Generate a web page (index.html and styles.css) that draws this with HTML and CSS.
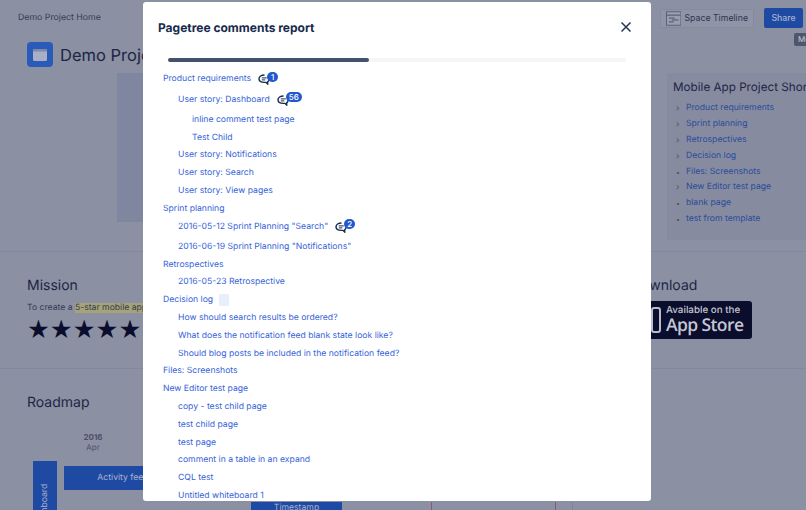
FILE: index.html
```html
<!DOCTYPE html>
<html lang="en">
<head>
    <meta charset="UTF-8">
    <meta name="viewport" content="width=device-width, initial-scale=1.0">
    <title>Pagetree comments report - Demo Project</title>
    <link rel="stylesheet" href="styles.css">
</head>
<body>
    <div class="page">
        <header class="topbar">
            <span class="crumb">Demo Project Home</span>
            <div class="actions">
                <button class="timeline-btn">
                    <svg class="timeline-icon" width="16" height="15" viewBox="0 0 16 15">
                        <rect x="0.5" y="0.5" width="15" height="14" fill="#9a9fb0" stroke="#5a6076"/>
                        <path d="M1 4h14M3 7h6M6 9h7M3 11h5" stroke="#4a5068" fill="none"/>
                    </svg>
                    Space Timeline
                </button>
                <button class="share-btn">Share</button>
            </div>
        </header>
        <div class="tooltip">More</div>

        <div class="title-row">
            <div class="space-logo">
                <svg width="14" height="12" viewBox="0 0 14 12">
                    <rect width="14" height="12" rx="1.5" fill="#a9b0c6"/>
                    <rect x="0" y="0" width="14" height="2.5" fill="#7f88a8"/>
                </svg>
            </div>
            <h1>Demo Project Home</h1>
        </div>

        <section class="top-section">
            <div class="hero"></div>
            <aside class="shortcuts">
                <h3>Mobile App Project Shortcuts</h3>
                <ul>
                    <li class="parent"><a>Product requirements</a></li>
                    <li class="parent"><a>Sprint planning</a></li>
                    <li class="parent"><a>Retrospectives</a></li>
                    <li class="parent"><a>Decision log</a></li>
                    <li class="leaf"><a>Files: Screenshots</a></li>
                    <li class="parent"><a>New Editor test page</a></li>
                    <li class="leaf"><a>blank page</a></li>
                    <li class="leaf"><a>test from template</a></li>
                </ul>
            </aside>
        </section>

        <section class="mission-section">
            <div class="mission">
                <h2>Mission</h2>
                <p>To create a <mark>5-star mobile app</mark></p>
                <div class="stars">★★★★★</div>
            </div>
            <div class="download">
                <h2>Download</h2>
                <div class="badge-store">
                    <svg class="phone" width="10" height="26" viewBox="0 0 10 26">
                        <rect x="1" y="1" width="8" height="24" rx="2" fill="none" stroke="#b9bccb" stroke-width="2"/>
                    </svg>
                    <div class="store-text">
                        <span class="store-small">Available on the</span>
                        <span class="store-big">App Store</span>
                    </div>
                </div>
            </div>
        </section>

        <section class="roadmap">
            <h2>Roadmap</h2>
            <div class="year"><b>2016</b><span>Apr</span></div>
            <div class="chart">
                <div class="lane"><span>Dashboard</span></div>
                <div class="bars">
                    <div class="bar bar-activity">Activity feed</div>
                    <div class="bar bar-time">Timestamp</div>
                </div>
                <div class="marks">
                    <i class="mark-red"></i>
                    <i class="mark-red"></i>
                    <i class="mark-grey"></i>
                </div>
            </div>
        </section>

        <div class="modal">
            <div class="modal-head">
                <h2>Pagetree comments report</h2>
                <svg class="close" width="12" height="12" viewBox="0 0 12 12">
                    <path d="M1.5 1.5l9 9M10.5 1.5l-9 9" stroke="#253858" stroke-width="1.5" fill="none"/>
                </svg>
            </div>
            <div class="progress"><div class="progress-fill"></div></div>
            <ul class="tree">
                <li class="lvl0 commented"><a>Product requirements</a><span class="comments"><svg width="14" height="12" viewBox="0 0 14 12"><path d="M6.5 2C3.4 2 1 3.4 1 5.7s2.4 3.7 5.5 3.7h1.6l1.6 1.6V8.9c1-.7 1.5-1.8 1.4-3.2" fill="#fff" stroke="#172b4d" stroke-width="1.4"/><path d="M3.8 4.9h5M3.8 6.9h3.5" stroke="#172b4d"/></svg><b>1</b></span></li>
                <li class="lvl1 commented"><a>User story: Dashboard</a><span class="comments"><svg width="14" height="12" viewBox="0 0 14 12"><path d="M6.5 2C3.4 2 1 3.4 1 5.7s2.4 3.7 5.5 3.7h1.6l1.6 1.6V8.9c1-.7 1.5-1.8 1.4-3.2" fill="#fff" stroke="#172b4d" stroke-width="1.4"/><path d="M3.8 4.9h5M3.8 6.9h3.5" stroke="#172b4d"/></svg><b>56</b></span></li>
                <li class="lvl2"><a>inline comment test page</a></li>
                <li class="lvl2"><a>Test Child</a></li>
                <li class="lvl1"><a>User story: Notifications</a></li>
                <li class="lvl1"><a>User story: Search</a></li>
                <li class="lvl1"><a>User story: View pages</a></li>
                <li class="lvl0"><a>Sprint planning</a></li>
                <li class="lvl1 commented"><a>2016-05-12 Sprint Planning "Search"</a><span class="comments"><svg width="14" height="12" viewBox="0 0 14 12"><path d="M6.5 2C3.4 2 1 3.4 1 5.7s2.4 3.7 5.5 3.7h1.6l1.6 1.6V8.9c1-.7 1.5-1.8 1.4-3.2" fill="#fff" stroke="#172b4d" stroke-width="1.4"/><path d="M3.8 4.9h5M3.8 6.9h3.5" stroke="#172b4d"/></svg><b>2</b></span></li>
                <li class="lvl1"><a>2016-06-19 Sprint Planning "Notifications"</a></li>
                <li class="lvl0"><a>Retrospectives</a></li>
                <li class="lvl1"><a>2016-05-23 Retrospective</a></li>
                <li class="lvl0"><a>Decision log</a><span class="blank-chip"></span></li>
                <li class="lvl1"><a>How should search results be ordered?</a></li>
                <li class="lvl1"><a>What does the notification feed blank state look like?</a></li>
                <li class="lvl1"><a>Should blog posts be included in the notification feed?</a></li>
                <li class="lvl0"><a>Files: Screenshots</a></li>
                <li class="lvl0"><a>New Editor test page</a></li>
                <li class="lvl1"><a>copy - test child page</a></li>
                <li class="lvl1"><a>test child page</a></li>
                <li class="lvl1"><a>test page</a></li>
                <li class="lvl1"><a>comment in a table in an expand</a></li>
                <li class="lvl1"><a>CQL test</a></li>
                <li class="lvl1"><a>Untitled whiteboard 1</a></li>
            </ul>
        </div>
    </div>
</body>
</html>
```

FILE: styles.css
```css
* {
    box-sizing: border-box;
}

body {
    margin: 0;
    font-family: 'Inter', sans-serif;
    text-rendering: geometricPrecision;
}

.page {
    position: relative;
    width: 806px;
    height: 510px;
    overflow: hidden;
    background: #8b90a3;
    color: #1d2645;
}

h1,
h2,
h3,
p,
ul {
    margin: 0;
    padding: 0;
    font-weight: 400;
}

ul {
    list-style: none;
}

.topbar {
    display: flex;
    justify-content: space-between;
    align-items: center;
    height: 36px;
    padding: 0 3px 0 18px;
}

.crumb {
    font-size: 8.75px;
    color: #353b54;
}

.actions {
    display: flex;
    align-items: center;
    gap: 10px;
}

.timeline-btn {
    display: flex;
    align-items: center;
    gap: 3px;
    width: 94px;
    height: 19px;
    padding: 0 5px;
    background: #8f94a7;
    border: 1px solid #858a9e;
    font: 8.75px 'Inter', sans-serif;
    color: #2f354e;
    white-space: nowrap;
}

.share-btn {
    width: 39px;
    height: 20px;
    background: #1f4aa3;
    border: none;
    border-radius: 2px;
    font: 500 8.75px 'Inter', sans-serif;
    color: #a9b3cf;
}

.tooltip {
    position: absolute;
    top: 33px;
    left: 794px;
    height: 13px;
    padding: 0 4px;
    background: #4f566c;
    border-radius: 2px;
    font-size: 8px;
    line-height: 13px;
    color: #c9ccd6;
}

.title-row {
    display: flex;
    align-items: center;
    gap: 7px;
    height: 37px;
    padding: 0 0 0 27px;
}

.space-logo {
    display: flex;
    align-items: center;
    justify-content: center;
    width: 26px;
    height: 25px;
    background: #2a5bb8;
    border-radius: 4px;
}

h1 {
    font-size: 16.5px;
    white-space: nowrap;
}

.top-section {
    display: flex;
    justify-content: space-between;
    height: 179px;
    padding-left: 117px;
    border-bottom: 1px solid #83889c;
}

.hero {
    width: 200px;
    height: 149px;
    background: #7e879f;
}

.shortcuts {
    width: 139px;
    height: 167px;
    padding: 6px 0 0 6px;
    background: #868ba0;
}

.shortcuts h3 {
    font-size: 11.7px;
    line-height: 16px;
    margin-bottom: 6px;
    white-space: nowrap;
}

.shortcuts li {
    position: relative;
    height: 15.9px;
    padding-left: 13px;
    font-size: 8.65px;
    line-height: 15.9px;
    color: #2a4c9a;
    white-space: nowrap;
}

.shortcuts li::before {
    position: absolute;
    left: 3px;
    color: #4d5369;
    font-size: 7px;
}

.shortcuts .parent::before {
    content: "›";
    font-size: 9px;
}

.shortcuts .leaf::before {
    content: "•";
}

.mission-section {
    display: flex;
    justify-content: space-between;
    height: 117px;
    padding: 24px 54px 0 27px;
    border-bottom: 1px solid #83889c;
}

.mission-section h2,
.roadmap h2 {
    font-size: 14px;
    line-height: 20px;
}

.mission p {
    margin-top: 6px;
    font-size: 8.65px;
    line-height: 12px;
    color: #353b54;
    white-space: nowrap;
}

mark {
    background: #a5a377;
    color: #353b54;
}

.stars {
    margin-top: 2px;
    font-family: 'DejaVu Sans', sans-serif;
    font-size: 25.5px;
    line-height: 28px;
    color: #0a0d2b;
    white-space: nowrap;
}

.download {
    width: 121px;
}

.badge-store {
    display: flex;
    align-items: center;
    gap: 5px;
    width: 121px;
    height: 38px;
    margin-top: 5px;
    padding-left: 20px;
    background: #0a0d2b;
    border-radius: 3px;
}

.store-text {
    display: flex;
    flex-direction: column;
    color: #c4c7d3;
}

.store-small {
    font-size: 9.8px;
    font-weight: 500;
    line-height: 10px;
}

.store-big {
    font-family: 'Open Sans', sans-serif;
    font-size: 17.5px;
    font-weight: 600;
    line-height: 19px;
    letter-spacing: -0.6px;
}

.roadmap {
    padding: 24px 0 0 27px;
}

.year {
    display: flex;
    flex-direction: column;
    align-items: center;
    width: 132px;
    margin-top: 19px;
    font-size: 8px;
    line-height: 10px;
    color: #4a5068;
}

.chart {
    display: flex;
    margin: 9px 0 0 6px;
}

.lane {
    display: flex;
    align-items: center;
    justify-content: center;
    width: 24px;
    height: 90px;
    background: #1f4aa3;
    color: #a9b3cf;
    font-size: 8.65px;
}

.lane span {
    transform: rotate(-90deg);
    white-space: nowrap;
}

.bars {
    position: relative;
    margin-top: 5px;
    margin-left: 7px;
}

.bar {
    display: flex;
    align-items: center;
    justify-content: center;
    background: #1f4aa3;
    color: #a9b3cf;
    font-size: 8.65px;
}

.bar-activity {
    width: 118px;
    height: 24px;
}

.bar-time {
    align-items: flex-start;
    width: 91px;
    height: 24px;
    margin: 12px 0 0 187px;
    padding-top: 1px;
}

.marks {
    display: flex;
    margin-left: 89px;
    padding-top: 41px;
}

.marks i {
    display: block;
    width: 1px;
    height: 20px;
}

.mark-red {
    background: #8a5a70;
    margin-right: 123px;
}

.mark-grey {
    background: #7e8398;
    margin-left: -107px;
}

.modal {
    position: absolute;
    top: 2px;
    left: 143px;
    width: 508px;
    height: 499px;
    overflow: hidden;
    background: #fff;
    border-radius: 3px;
}

.modal-head {
    display: flex;
    align-items: center;
    justify-content: space-between;
    height: 50px;
    padding: 0 19px 0 15px;
}

.modal-head h2 {
    font-size: 12px;
    font-weight: 700;
    color: #172b4d;
}

.progress {
    width: 458px;
    height: 4px;
    margin: 6px 0 0 25px;
    background: #f4f5f7;
    border-radius: 2px;
}

.progress-fill {
    width: 201px;
    height: 4px;
    background: #42526e;
    border-radius: 2px;
}

.tree {
    padding-top: 8.6px;
}

.tree li {
    display: flex;
    align-items: center;
    height: 17.8px;
    font-size: 8.65px;
    color: #3563d9;
    white-space: nowrap;
}

.tree .lvl0 {
    padding-left: 20px;
}

.tree .lvl1 {
    padding-left: 35px;
}

.tree .lvl2 {
    padding-left: 49px;
}

.tree .commented {
    margin-bottom: 2.4px;
}

.comments {
    position: relative;
    display: flex;
    align-items: center;
    height: 12px;
    margin-left: 7px;
}

.comments b {
    height: 10px;
    min-width: 11px;
    margin: -5px 0 0 -5px;
    padding: 0 3px;
    background: #2158d0;
    border-radius: 5px;
    font-size: 8px;
    font-weight: 500;
    line-height: 10px;
    text-align: center;
    color: #fff;
}

.blank-chip {
    width: 10px;
    height: 12px;
    margin-left: 6px;
    background: #e9eefb;
}
```
